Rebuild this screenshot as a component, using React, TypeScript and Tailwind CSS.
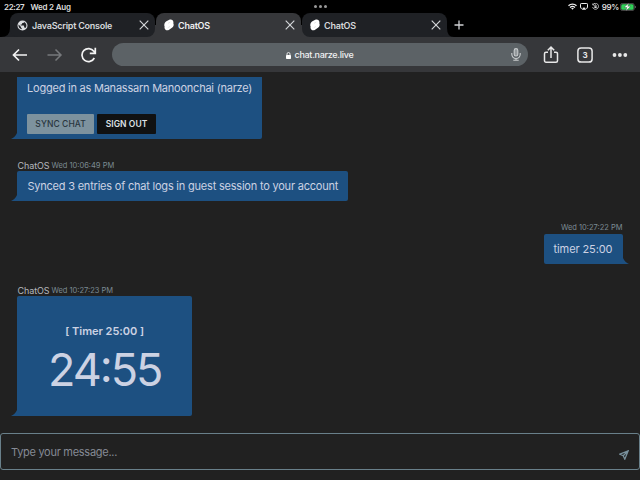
import React from 'react';

function Globe() {
  return (
    <svg className="h-[11px] w-[11px] shrink-0" viewBox="0 0 24 24" fill="#dcdee1">
      <path d="M12 1a11 11 0 1 0 0 22 11 11 0 0 0 0-22zm-1.500 19.200C6.300 19.600 3.200 16.200 3.200 12c0-.7.1-1.300.3-2l5.300 5.100v1.200c0 1 .8 1.900 1.700 2zm8.100-2.700c-.3-.9-1-1.400-2-1.400h-1.100v-3.200c0-.6-.4-1-1-1H8v-2.100h2.200c.6 0 1-.5 1-1.100V6.500h2.200c1.200 0 2.100-.9 2.100-2v-.4a8.900 8.900 0 0 1 3.100 13.400z" />
    </svg>
  );
}

function ChatLogo() {
  return (
    <svg className="h-[12px] w-[10px] shrink-0" viewBox="0 0 20 24">
      <path d="M4 5 10.500 1.600c2.200-1.200 5-.9 6.700.9 1.600 1.700 2 3.900 1.500 6 .9 1.700 1 3.800.2 5.600-.6 1.500-1.600 2.600-3 3.400L9.500 21.900c-2.300 1.300-5.200.9-6.900-1-1.500-1.600-1.900-3.900-1.400-5.900-.9-1.700-1-3.700-.3-5.500C1.500 7.500 2.500 6 4 5z" fill="#fff" />
      <path d="m8 8.700 4.500-2.600M7.500 17.500l4.500-2.600" stroke="#cfcfcf" strokeWidth="1" />
    </svg>
  );
}

function Close() {
  return (
    <svg className="h-[10px] w-[10px] shrink-0" viewBox="0 0 10 10" fill="none" stroke="#d4d6d9" strokeWidth="1.150">
      <path d="m.7.7 8.600 8.600M9.300.7.7 9.300" />
    </svg>
  );
}

function Tab({ title, active, globe }: { title: string; active?: boolean; globe?: boolean }) {
  return (
    <div
      className={`flex h-6 w-[145px] items-center pr-[6px] ${
        active ? 'rounded-t-[8px] bg-[#36373a] text-[#eeeff1]' : 'rounded-[8px] bg-[#1f2125] text-[#d5d7da]'
      } ${globe ? 'pl-[7px]' : 'pl-[8px]'}`}
    >
      {globe ? <Globe /> : <ChatLogo />}
      <span className={`ml-[4px] flex-1 whitespace-nowrap text-[9px] leading-none font-semibold ${globe ? 'tracking-[-0.24px]' : 'tracking-[-0.22px]'}`}>{title}</span>
      <Close />
    </div>
  );
}

function StatusBar() {
  return (
    <div className="grid h-[13px] grid-cols-[1fr_auto_1fr] items-center pr-[4px] pl-[4px] text-[8px] leading-none font-semibold text-[#dfdfdf]">
      <div className="flex gap-[6px] whitespace-nowrap">
        <span className="tracking-[-0.35px]">22:27</span>
        <span className="tracking-[-0.2px]">Wed 2 Aug</span>
      </div>
      <div className="flex gap-[2px]">
        <i className="h-[3px] w-[3px] rounded-full bg-[#999]" />
        <i className="h-[3px] w-[3px] rounded-full bg-[#999]" />
        <i className="h-[3px] w-[3px] rounded-full bg-[#999]" />
      </div>
      <div className="flex items-center justify-end">
        <svg className="mr-[3px] h-[7px] w-[9px]" viewBox="0 0 18 14" fill="none" stroke="#eee" strokeWidth="2.800">
          <path d="M1 5.500a11.500 11.500 0 0 1 16 0M4 9a7.500 7.500 0 0 1 10 0" />
          <path d="m9 13.500-2.800-2.800a3.900 3.900 0 0 1 5.600 0z" fill="#eee" stroke="none" />
        </svg>
        <svg className="mr-[4px] h-[7px] w-[8px]" viewBox="0 0 16 14" fill="none" stroke="#eee" strokeWidth="2">
          <path d="M4.500 10.500H2.500A1.500 1.500 0 0 1 1 9V2.500A1.500 1.500 0 0 1 2.500 1h11A1.500 1.500 0 0 1 15 2.500V9a1.500 1.500 0 0 1-1.500 1.500h-2" />
          <path d="m8 8 4.500 5.500h-9z" fill="#eee" stroke="none" />
        </svg>
        <svg className="mr-[3px] h-[7px] w-[7px]" viewBox="0 0 14 14" fill="none" stroke="#ddd" strokeWidth="1.600">
          <path d="M2 3.200a6 6 0 1 1-.8 5M1.500 1v3h3" />
          <path d="M4.700 6.500h4.600V10H4.700z" fill="#ddd" stroke="none" />
          <path d="M5.600 6.500V5a1.400 1.400 0 0 1 2.800 0v1.500" />
        </svg>
        <span className="mr-[1px] tracking-[-0.35px]">99%</span>
        <svg className="h-[8px] w-[16px]" viewBox="0 0 32 16">
          <rect x=".7" y=".7" width="28" height="14.600" rx="4.500" fill="#222" stroke="#666" strokeWidth="1.200" />
          <rect x="2.500" y="2.500" width="24.500" height="11" rx="3" fill="#30d158" />
          <path d="M30 5.500v5c2-.5 2-4.500 0-5z" fill="#888" />
          <path d="m18 0-10 9H14l-2.500 7 10-9.500h-6z" fill="#fff" stroke="#222" strokeWidth=".6" />
        </svg>
      </div>
    </div>
  );
}

function TabStrip() {
  return (
    <div className="flex h-6">
      <svg className="h-6 w-[10px]" viewBox="0 0 10 24">
        <path d="M10 15v9H1q9 0 9-9z" fill="#1f2125" />
      </svg>
      <div className="flex gap-px bg-[linear-gradient(to_bottom,#000_50%,#36373a_50%)]">
        <div className="bg-[linear-gradient(to_right,#1f2125_50%,transparent_50%)] bg-[length:100%_10px] bg-bottom bg-no-repeat">
          <Tab title="JavaScript Console" globe />
        </div>
        <Tab title="ChatOS" active />
        <div className="bg-[linear-gradient(to_left,#1f2125_50%,transparent_50%)] bg-[length:100%_10px] bg-bottom bg-no-repeat">
          <Tab title="ChatOS" />
        </div>
      </div>
      <svg className="h-6 w-[7px]" viewBox="0 0 7 24">
        <path d="M0 15v9h7q-7 0-7-9z" fill="#1f2125" />
      </svg>
      <svg className="mt-[7px] h-[10px] w-[10px]" viewBox="0 0 10 10" stroke="#cfd1d4" strokeWidth="1.300">
        <path d="M5 .5v9M.5 5h9" />
      </svg>
    </div>
  );
}

function Toolbar() {
  return (
    <div className="flex h-[35px] items-center bg-[#36373a] pl-[12px]">
      <svg className="h-[14px] w-[16px]" viewBox="0 0 16 14" fill="none" stroke="#f3f3f3" strokeWidth="1.700">
        <path d="M15 7H1.500M7 1.500 1.500 7 7 12.500" />
      </svg>
      <svg className="ml-[19px] h-[14px] w-[16px]" viewBox="0 0 16 14" fill="none" stroke="#77797c" strokeWidth="1.500">
        <path d="M.5 7h13.500M8.500 1.500 14 7l-5.500 5.500" />
      </svg>
      <svg className="ml-[18px] h-[16px] w-[16px]" viewBox="0 0 16 16" fill="none" stroke="#f3f3f3" strokeWidth="1.700">
        <path d="M13.300 11a6.500 6.500 0 1 1-.5-6.700l1.400 1.500M14.300.8v5.600H8.800" />
      </svg>
      <div className="ml-[15px] flex h-[23px] w-[416px] items-center rounded-full bg-[#5c6266] pr-[7px]">
        <div className="flex flex-1 items-center justify-center pl-[17px] text-[9px] leading-none font-medium text-[#f0f1f2]">
          <svg className="mt-px mr-[3px] h-[7px] w-[5px]" viewBox="0 0 10 14">
            <rect x="0" y="6" width="10" height="8" rx="1.500" fill="#fff" />
            <path d="M2 7V4a3 3 0 0 1 6 0v3" fill="none" stroke="#fff" strokeWidth="1.600" />
          </svg>
          <span className="tracking-[-0.28px]">chat.narze.live</span>
        </div>
        <svg className="h-[13px] w-[10px]" viewBox="0 0 10 13" fill="none" stroke="#c7cacc" strokeWidth="1.100">
          <rect x="3.200" y=".6" width="3.600" height="7.400" rx="1.800" fill="#93989b" />
          <path d="M.8 5v1.300a4.200 4.200 0 0 0 8.400 0V5M5 10.500v1.700M2.300 12.300h5.400" />
        </svg>
      </div>
      <svg className="ml-[15px] h-[17px] w-[16px]" viewBox="0 0 16 17" fill="none" stroke="#e8e8e8" strokeWidth="1.500">
        <path d="M5 6.200H3A1.500 1.500 0 0 0 1.500 7.700v7A1.500 1.500 0 0 0 3 16.200h10a1.500 1.500 0 0 0 1.500-1.500v-7A1.500 1.500 0 0 0 13 6.200h-2M8 12V1.200M4.800 4.300 8 1.100l3.200 3.200" />
      </svg>
      <div className="relative ml-[18px] flex h-[16px] w-[16px] items-center justify-center text-[8px] leading-none font-bold text-[#e8e8e8]">
        <svg className="absolute inset-0" viewBox="0 0 16 16" fill="none" stroke="#e8e8e8" strokeWidth="1.500">
          <rect x=".9" y=".9" width="14.200" height="14.200" rx="3.200" />
        </svg>
        3
      </div>
      <svg className="ml-[19px] h-[4px] w-[16px]" viewBox="0 0 16 4" fill="#e8e8e8">
        <circle cx="2.500" cy="2" r="1.900" />
        <circle cx="7.900" cy="2" r="1.900" />
        <circle cx="13.300" cy="2" r="1.900" />
      </svg>
    </div>
  );
}

function Tail({ right }: { right?: boolean }) {
  return (
    <svg className={`h-[6px] w-[6px] shrink-0 self-end ${right ? '-scale-x-100' : ''}`} viewBox="0 0 6 6">
      <path d="M6 0v6H0q4-1.500 6-6z" fill="#1d5081" />
    </svg>
  );
}

function Label({ name, time }: { name?: string; time: string }) {
  return (
    <div className="flex h-[12.500px] items-center gap-[2px] pt-[1.500px] leading-none whitespace-nowrap">
      {name && <span className="text-[9px] tracking-[-0.1px] text-[#b5b8bd]">{name}</span>}
      <span className="text-[7.500px] text-[#7c8b93]">{time}</span>
    </div>
  );
}

export default function App() {
  return (
    <div className="flex h-[480px] w-[640px] flex-col overflow-hidden bg-[#212121] font-['Inter','Liberation_Sans',sans-serif]">
      <header className="shrink-0 bg-black">
        <StatusBar />
        <TabStrip />
        <Toolbar />
      </header>

      <main className="flex min-h-0 flex-1 flex-col pt-[5px] text-[11px] leading-none tracking-[-0.23px] text-[#ccd2e3]">
        <div className="flex pl-[11.400px]">
          <Tail />
          <div className="h-[61.500px] w-[245px] rounded-b-[2px] rounded-bl-none bg-[#1d5081] pt-[6px] pl-[9.700px]">
            <p className="whitespace-nowrap">Logged in as Manassarn Manoonchai (narze)</p>
            <div className="mt-[20px] flex gap-[3px] text-[8.500px] font-medium tracking-[0.08px]">
              <button className="h-[20px] w-[67px] rounded-[1px] bg-[#7d929e] text-[#29363e]">SYNC CHAT</button>
              <button className="h-[20px] w-[59px] rounded-[1px] bg-[#101112] font-semibold text-[#dde0e5]">SIGN OUT</button>
            </div>
          </div>
        </div>

        <div className="mt-[20px] pl-[17.500px] tracking-normal">
          <Label name="ChatOS" time="Wed 10:06:49 PM" />
        </div>
        <div className="flex pl-[11.400px]">
          <Tail />
          <div className="flex h-[30px] w-[331px] items-center rounded-[2px] rounded-bl-none bg-[#1d5081] pt-[1px] pl-[10px] tracking-[-0.21px] whitespace-nowrap">
            Synced 3 entries of chat logs in guest session to your account
          </div>
        </div>

        <div className="mt-[20px] flex justify-end pr-[17.500px] tracking-normal">
          <Label time="Wed 10:27:22 PM" />
        </div>
        <div className="flex justify-end pr-[11.500px]">
          <div className="flex h-[30px] w-[79px] items-center justify-center rounded-[2px] rounded-br-none bg-[#1d5081] pt-[1px] tracking-[-0.1px]">timer 25:00</div>
          <Tail right />
        </div>

        <div className="mt-[20px] pl-[17.500px] tracking-normal">
          <Label name="ChatOS" time="Wed 10:27:23 PM" />
        </div>
        <div className="flex pl-[11.400px]">
          <Tail />
          <div className="flex h-[120px] w-[174.500px] flex-col items-center rounded-[2px] rounded-bl-none bg-[#1d5081] pt-[30px]">
            <span className="font-semibold tracking-[-0.03px]">[ Timer 25:00 ]</span>
            <span className="mt-[10px] text-[45px] font-normal tracking-[-2px]">
              24<span className="relative -top-[4px]">:</span>55
            </span>
          </div>
        </div>
      </main>

      <div className="mb-[10px] flex h-[37px] shrink-0 items-center justify-between rounded-[3px] border border-[#69808a] pr-[10px] pl-[10px]">
        <span className="pt-[2px] text-[11px] tracking-[-0.28px] text-[#858a95]">Type your message...</span>
        <svg className="mt-[7px] h-[10px] w-[10px]" viewBox="0 0 10 10" fill="none" stroke="#78909c" strokeWidth="1.250">
          <path d="M9.200.8.8 4.200l3.400 1.600L5.800 9.200zM9.200.8 4.200 5.800" />
        </svg>
      </div>
    </div>
  );
}
